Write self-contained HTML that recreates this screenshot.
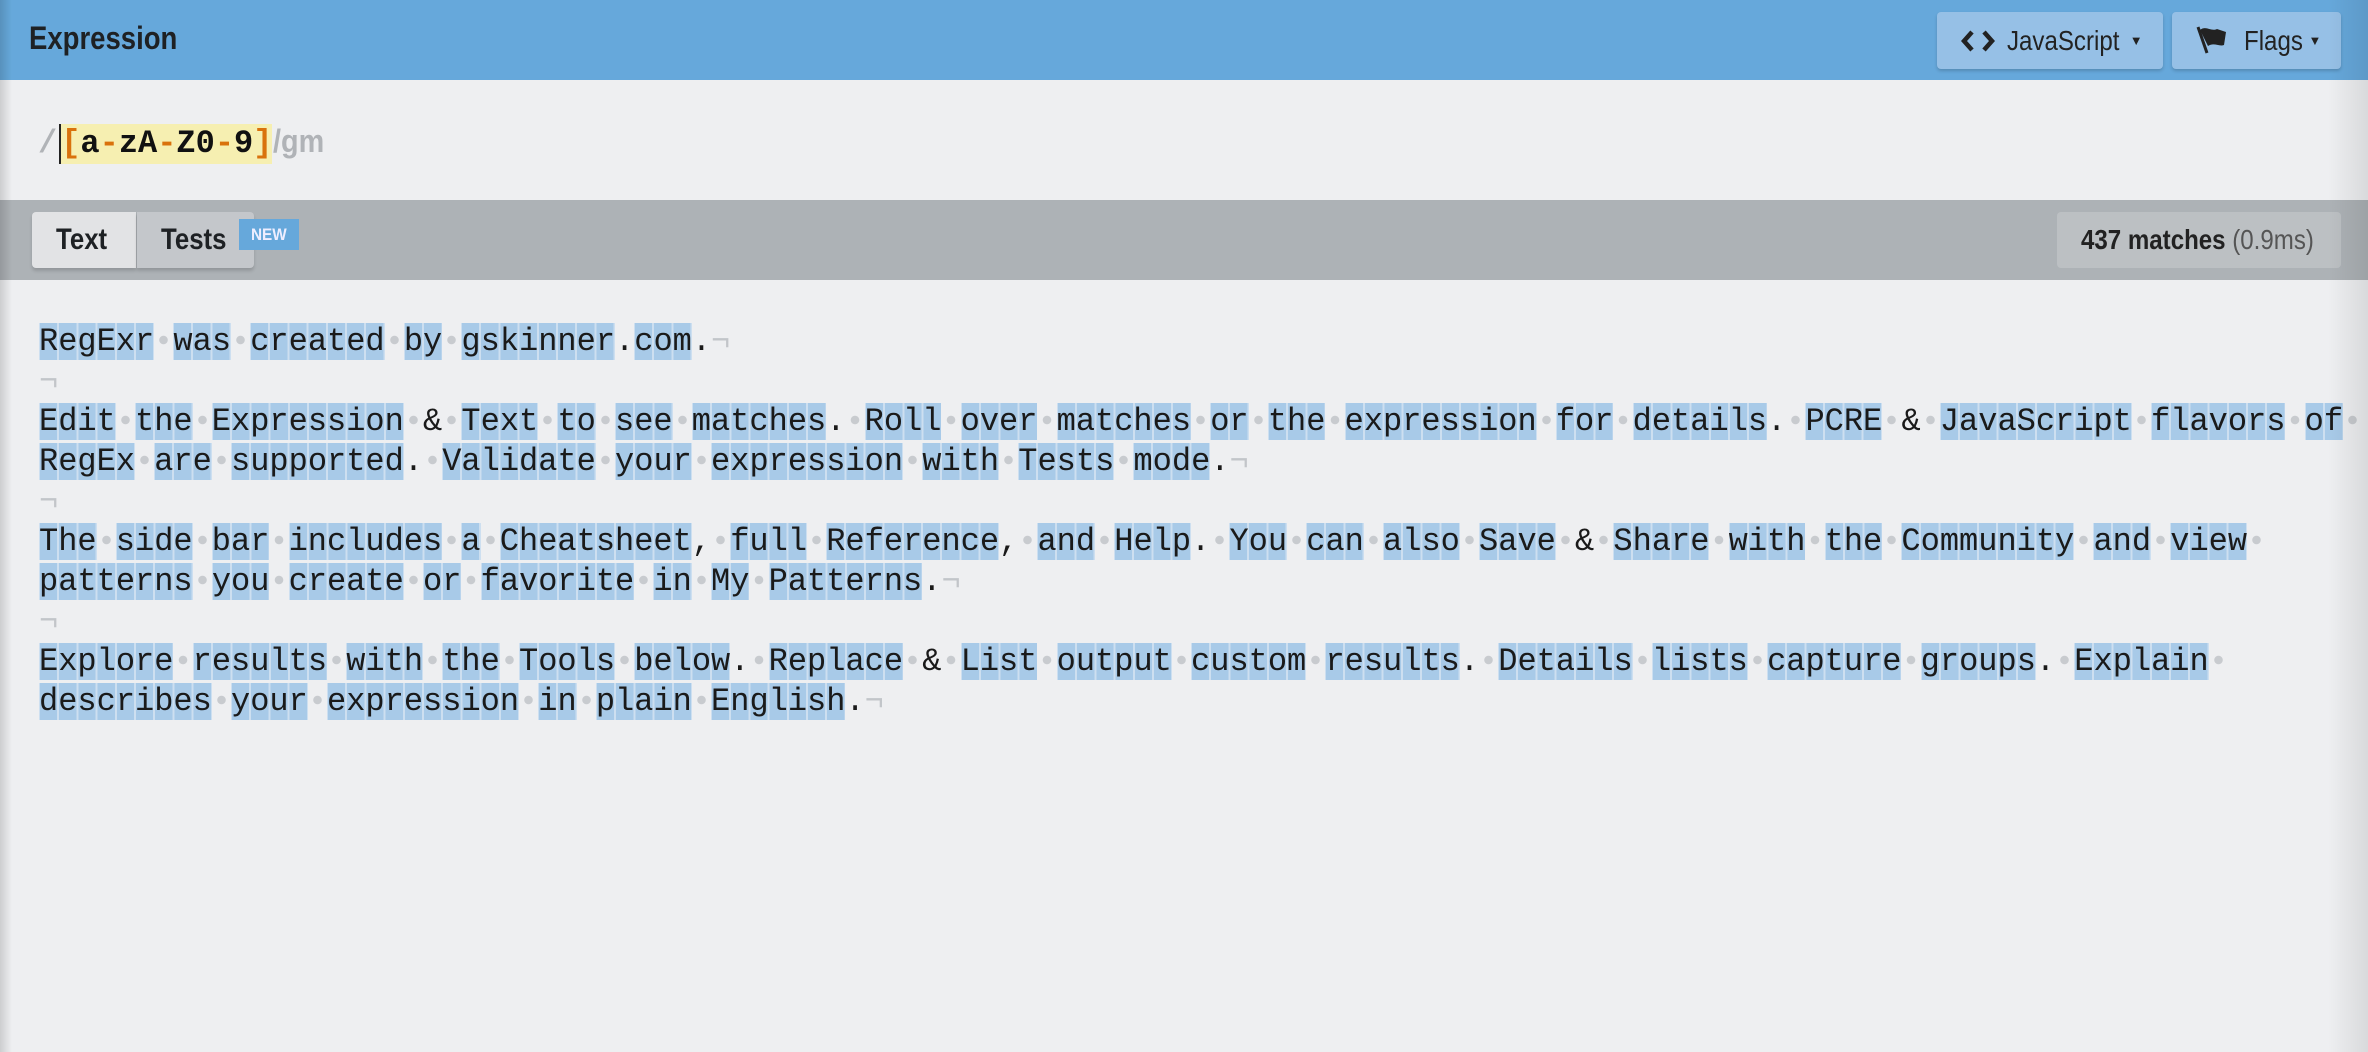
<!DOCTYPE html>
<html><head><meta charset="utf-8"><style>
*{margin:0;padding:0;box-sizing:border-box}
body{width:2368px;height:1052px;overflow:hidden;background:#eeeff1;position:relative;font-family:"Liberation Sans",sans-serif;color:#222}
.n{display:inline-block;transform:scaleX(.86);transform-origin:left center}
.hdr{position:absolute;left:0;top:0;width:2368px;height:80px;background:#66a8db}
.hdr h1{position:absolute;left:29px;top:20px;font-size:32px;font-weight:bold;color:#1e2124}
.btn{position:absolute;top:12px;height:57px;background:#96c0e6;border-radius:4px;box-shadow:0 2px 3px rgba(0,0,0,.18);font-size:28px;color:#222;display:flex;align-items:center}
.btn small{font-size:13px;margin-left:6px}
.exp{position:absolute;left:0;top:80px;width:2368px;height:120px}
.re{position:absolute;left:38px;top:41px;height:40px;font:bold 32px/40px "Liberation Mono",monospace;white-space:pre}
.sl{color:#b0b3b7}
.gm{color:#b0b3b7;font-family:"Liberation Sans",sans-serif;font-weight:bold;display:inline-block;transform:scaleX(.9);transform-origin:left center;margin-left:1px}
.hl{background:#f6efb1;display:inline-block;height:40px;border-left:2px solid #222;color:#111;margin-left:2px}
.o{color:#d9720c}
.bar{position:absolute;left:0;top:200px;width:2368px;height:80px;background:#adb2b6}
.tab{position:absolute;top:12px;height:56px;font-size:30px;font-weight:bold;color:#1e2124;display:flex;align-items:center;box-shadow:0 3px 3px rgba(0,0,0,.15)}
.new{position:absolute;left:239px;top:19px;width:60px;height:31px;background:#66a8db;color:#eef;font:bold 17px/31px "Liberation Sans",sans-serif;text-align:center}
.cnt{position:absolute;left:2057px;top:12px;width:284px;height:56px;background:#bcc0c3;border-radius:4px;font-size:28px;display:flex;align-items:center;padding-left:24px}
.txt{position:absolute;left:39px;top:322px;font:32px/40px "Liberation Mono",monospace;white-space:pre;color:#1a1a1a}
.txt b{font-weight:normal;background:repeating-linear-gradient(90deg,#cddff0 0 1px,#a8cae8 1px 18.2px,#cddff0 18.2px 19.2px)}
.txt i{display:inline-block;width:19.2px;height:20px;background:radial-gradient(circle at 50% 50%,#c8cbcf 0 4px,transparent 4.5px)}
.txt u{text-decoration:none;color:#c2c5c9}
.edgeL{position:absolute;left:0;top:0;width:12px;height:1052px;background:linear-gradient(90deg,rgba(0,0,0,.14),rgba(0,0,0,0))}
.edgeR{position:absolute;right:0;top:0;width:40px;height:1052px;background:linear-gradient(270deg,rgba(0,0,0,.09),rgba(0,0,0,0))}
</style></head><body>
<div class="hdr"><h1><span class="n">Expression</span></h1>
<div class="btn" style="left:1937px;width:226px;padding-left:24px">
<svg width="34" height="24" viewBox="0 0 34 24"><path d="M11 3 3 12l8 9M23 3l8 9-8 9" fill="none" stroke="#222" stroke-width="4.5"/></svg>
<span style="margin-left:12px" class="n">JavaScript</span><small style="margin-left:-8px">▼</small></div>
<div class="btn" style="left:2172px;width:169px;padding-left:24px">
<svg width="34" height="34" viewBox="0 0 34 34"><path d="M2 3l9 26" stroke="#222" stroke-width="3"/><path d="M4 6c6-5 11 2 17-1l9 3-2 13c-5 2-10-3-16 1z" fill="#222"/></svg>
<span style="margin-left:14px" class="n">Flags</span><small style="margin-left:-4px">▼</small></div>
</div>
<div class="exp"><div class="re"><span class="sl">/</span><span class="hl"><span class="o">[</span>a<span class="o">-</span>zA<span class="o">-</span>Z0<span class="o">-</span>9<span class="o">]</span></span><span class="gm">/gm</span></div></div>
<div class="bar">
<div class="tab" style="left:32px;width:104px;background:#e2e3e5;border-radius:4px 0 0 4px;padding-left:24px"><span class="n">Text</span></div>
<div class="tab" style="left:137px;width:117px;background:#c4c7cb;border-radius:0 4px 4px 0;padding-left:24px"><span class="n">Tests</span></div>
<div class="new"><span style="display:inline-block;transform:scaleX(.9)">NEW</span></div>
<div class="cnt"><span class="n" style="white-space:nowrap"><b>437 matches</b> <span style="color:#555">(0.9ms)</span></span></div>
</div>
<div class="txt"><b>RegExr</b><i></i><b>was</b><i></i><b>created</b><i></i><b>by</b><i></i><b>gskinner</b>.<b>com</b>.<u>¬</u>
<u>¬</u>
<b>Edit</b><i></i><b>the</b><i></i><b>Expression</b><i></i>&amp;<i></i><b>Text</b><i></i><b>to</b><i></i><b>see</b><i></i><b>matches</b>.<i></i><b>Roll</b><i></i><b>over</b><i></i><b>matches</b><i></i><b>or</b><i></i><b>the</b><i></i><b>expression</b><i></i><b>for</b><i></i><b>details</b>.<i></i><b>PCRE</b><i></i>&amp;<i></i><b>JavaScript</b><i></i><b>flavors</b><i></i><b>of</b><i></i>
<b>RegEx</b><i></i><b>are</b><i></i><b>supported</b>.<i></i><b>Validate</b><i></i><b>your</b><i></i><b>expression</b><i></i><b>with</b><i></i><b>Tests</b><i></i><b>mode</b>.<u>¬</u>
<u>¬</u>
<b>The</b><i></i><b>side</b><i></i><b>bar</b><i></i><b>includes</b><i></i><b>a</b><i></i><b>Cheatsheet</b>,<i></i><b>full</b><i></i><b>Reference</b>,<i></i><b>and</b><i></i><b>Help</b>.<i></i><b>You</b><i></i><b>can</b><i></i><b>also</b><i></i><b>Save</b><i></i>&amp;<i></i><b>Share</b><i></i><b>with</b><i></i><b>the</b><i></i><b>Community</b><i></i><b>and</b><i></i><b>view</b><i></i>
<b>patterns</b><i></i><b>you</b><i></i><b>create</b><i></i><b>or</b><i></i><b>favorite</b><i></i><b>in</b><i></i><b>My</b><i></i><b>Patterns</b>.<u>¬</u>
<u>¬</u>
<b>Explore</b><i></i><b>results</b><i></i><b>with</b><i></i><b>the</b><i></i><b>Tools</b><i></i><b>below</b>.<i></i><b>Replace</b><i></i>&amp;<i></i><b>List</b><i></i><b>output</b><i></i><b>custom</b><i></i><b>results</b>.<i></i><b>Details</b><i></i><b>lists</b><i></i><b>capture</b><i></i><b>groups</b>.<i></i><b>Explain</b><i></i>
<b>describes</b><i></i><b>your</b><i></i><b>expression</b><i></i><b>in</b><i></i><b>plain</b><i></i><b>English</b>.<u>¬</u></div>
<div class="edgeL"></div><div class="edgeR"></div>
</body></html>
